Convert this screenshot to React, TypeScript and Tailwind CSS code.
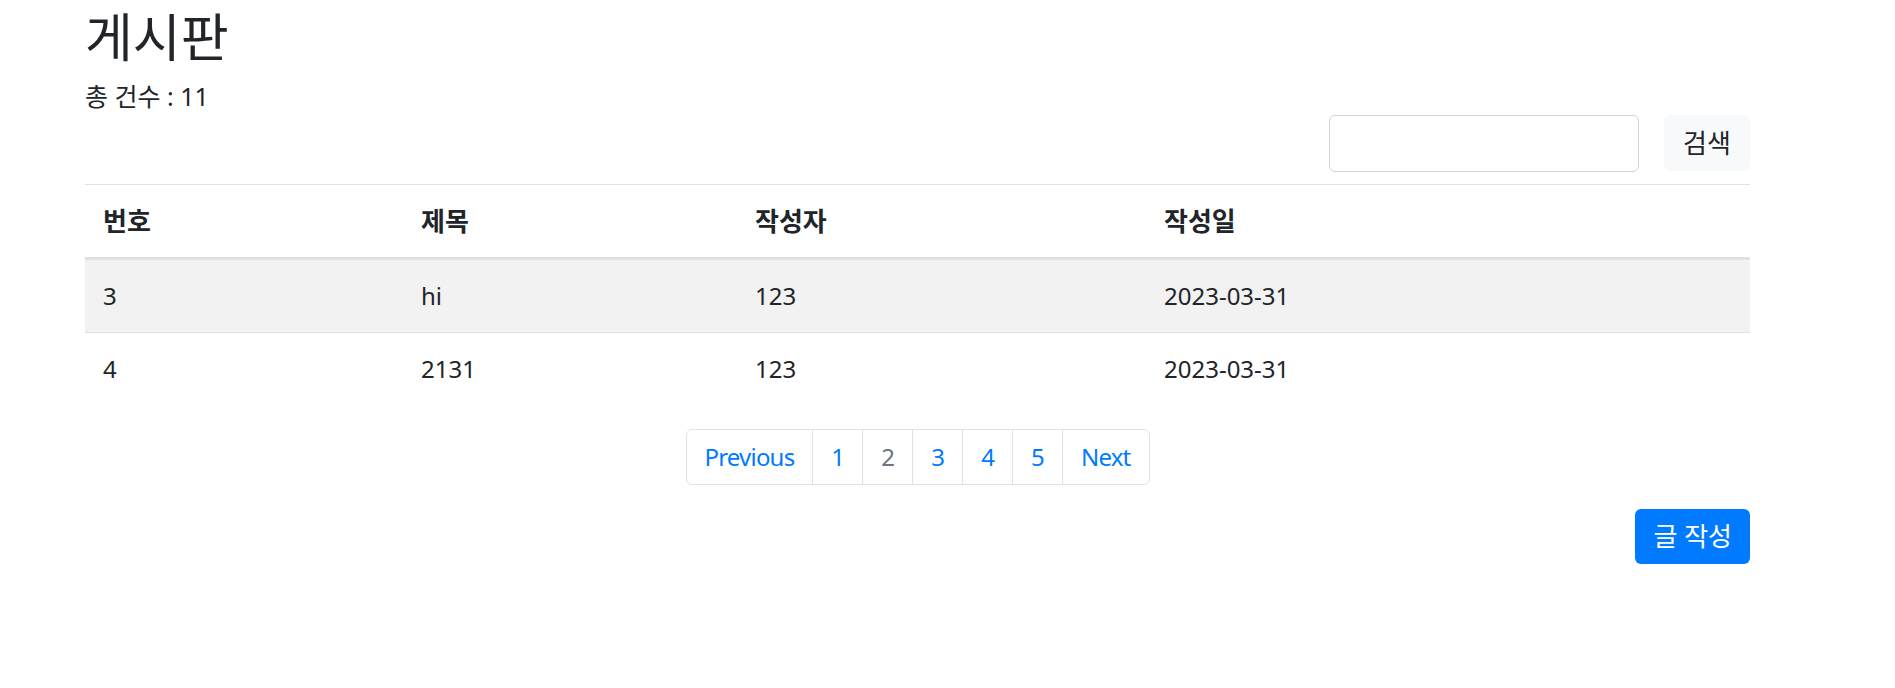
const rows = [
  { no: '3', title: 'hi', writer: '123', date: '2023-03-31' },
  { no: '4', title: '2131', writer: '123', date: '2023-03-31' },
]

const pages = ['Previous', '1', '2', '3', '4', '5', 'Next']

export default function App() {
  return (
    <div
      className="min-h-[688px] bg-white text-[#212529]"
      style={{ fontFamily: '"Noto Sans", "Noto Sans CJK KR", sans-serif' }}
    >
      <div className="ml-[85px] w-[1665px]">
        <h2 className="pt-[8px] mb-[12px] text-[52px] leading-[57.6px] font-normal">게시판</h2>
        <p className="text-[25px] leading-[36px]">총 건수 : 11</p>

        <div className="flex justify-end items-start">
          <input
            type="text"
            className="mt-px w-[310px] h-[57px] border border-[#ced4da] rounded-[6px] px-[18px] text-[24px] outline-none"
          />
          <button className="mt-px ml-[25px] w-[86px] h-[56px] rounded-[6px] bg-[#f8f9fa] text-[26px] leading-[36px]">
            검색
          </button>
        </div>

        <table className="mt-[12px] w-full border-collapse text-[24px] leading-[36px]">
          <thead className="text-[26px]">
            <tr className="border-t border-[#dee2e6]">
              <th className="w-[318px] p-[18px] text-left font-bold border-b-[3px] border-[#dee2e6]">번호</th>
              <th className="w-[334px] p-[18px] text-left font-bold border-b-[3px] border-[#dee2e6]">제목</th>
              <th className="w-[409px] p-[18px] text-left font-bold border-b-[3px] border-[#dee2e6]">작성자</th>
              <th className="p-[18px] text-left font-bold border-b-[3px] border-[#dee2e6]">작성일</th>
            </tr>
          </thead>
          <tbody>
            {rows.map((r, i) => (
              <tr key={r.no} className={`border-t border-[#dee2e6] ${i % 2 === 0 ? 'bg-[#f2f2f2]' : ''}`}>
                <td className="p-[18px]">{r.no}</td>
                <td className="p-[18px]">{r.title}</td>
                <td className="p-[18px]">{r.writer}</td>
                <td className="p-[18px]">{r.date}</td>
              </tr>
            ))}
          </tbody>
        </table>

        <nav className="mt-[24px] flex justify-center">
          <ul className="flex">
            {pages.map((p, i) => (
              <li key={p}>
                <a
                  href="#"
                  className={`block px-[18px] py-[12px] text-[24px] leading-[30px] tracking-[-0.8px] border border-[#dee2e6] bg-white ${
                    i > 0 ? '-ml-px' : 'rounded-l-[6px]'
                  } ${i === pages.length - 1 ? 'rounded-r-[6px]' : ''} ${
                    p === '2' ? 'text-[#6c757d]' : 'text-[#007bff]'
                  }`}
                >
                  {p}
                </a>
              </li>
            ))}
          </ul>
        </nav>

        <div className="mt-[24px] flex justify-end">
          <button className="h-[55px] px-[18px] rounded-[6px] bg-[#007bff] text-white text-[26px] leading-[36px]">
            글 작성
          </button>
        </div>
      </div>
    </div>
  )
}
